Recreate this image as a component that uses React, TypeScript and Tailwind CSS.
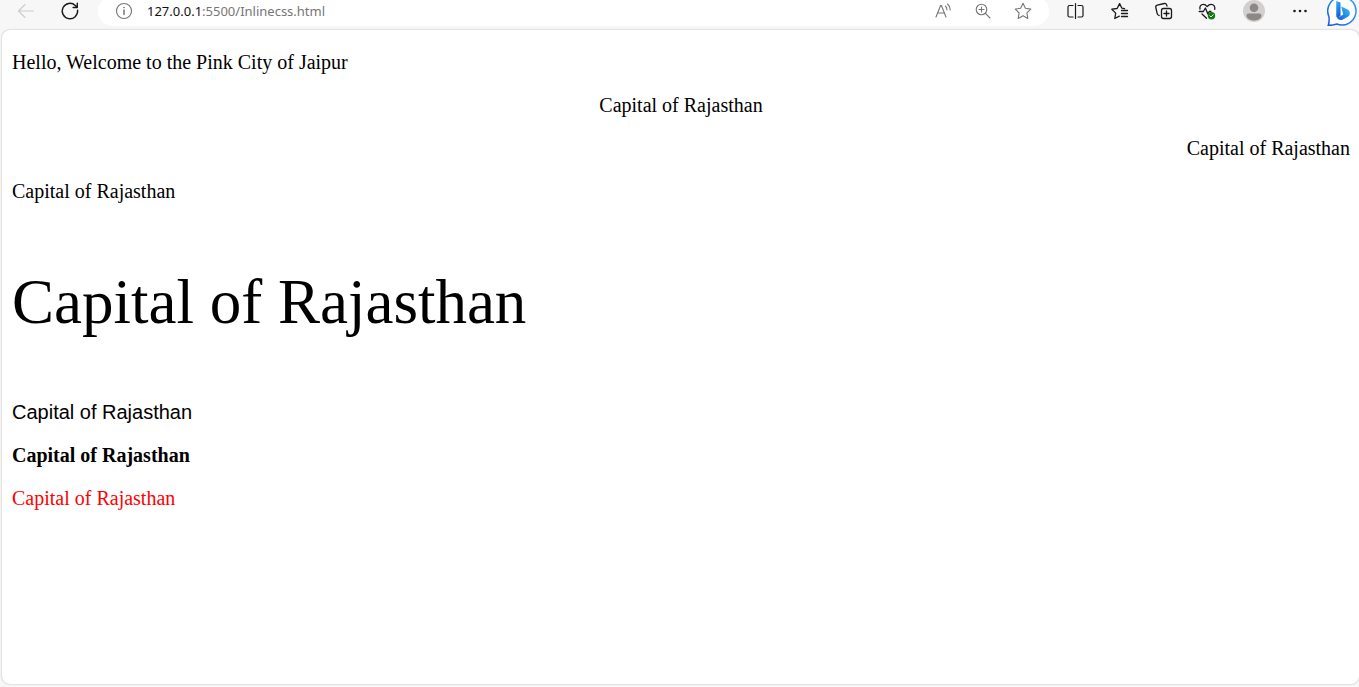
import type { ReactNode } from "react";

type IconButtonProps = {
  label: string;
  size?: string;
  children: ReactNode;
};

function IconButton({ label, size = "w-5", children }: IconButtonProps) {
  return (
    <button
      type="button"
      aria-label={label}
      className={`flex h-[22px] shrink-0 items-center justify-center ${size}`}
    >
      {children}
    </button>
  );
}

function Glyph({ children, width = 1.2 }: { children: ReactNode; width?: number }) {
  return (
    <svg
      viewBox="0 0 20 20"
      className="size-5 shrink-0"
      fill="none"
      stroke="currentColor"
      strokeWidth={width}
      strokeLinecap="round"
      strokeLinejoin="round"
      aria-hidden="true"
    >
      {children}
    </svg>
  );
}

function BingLogo() {
  return (
    <svg viewBox="0 0 30 30" className="size-[30px] shrink-0" aria-hidden="true">
      <defs>
        <linearGradient id="ring" x1="0" y1="1" x2="1" y2="0">
          <stop offset="0" stopColor="#1656d8" />
          <stop offset="0.5" stopColor="#2a80ee" />
          <stop offset="1" stopColor="#3aa5f5" />
        </linearGradient>
        <linearGradient id="stem" x1="0" y1="0" x2="0.4" y2="1">
          <stop offset="0" stopColor="#38b6f5" />
          <stop offset="1" stopColor="#1459dc" />
        </linearGradient>
        <linearGradient id="bowl" x1="0" y1="1" x2="1" y2="0">
          <stop offset="0" stopColor="#1757df" />
          <stop offset="1" stopColor="#39c5f3" />
        </linearGradient>
      </defs>
      <path
        d="M15 1a14 14 0 1 1-5.2 27c-2.6.9-5.5 1.4-8.5 1.3 1-3 1-6 .6-8.8A14 14 0 0 1 15 1z"
        fill="#fff"
        stroke="url(#ring)"
        strokeWidth="1.5"
      />
      <path
        d="M14.2 10.6l6 2.600c2 .9 2.800 2.500 2.600 4.600-.2 1.500-1 2.500-2.200 3.200l-4.600 2.400c-2.200 1.100-4.600.7-5.600-1.400l5.800-3.400z"
        fill="url(#bowl)"
      />
      <path d="M9.200 5l4.300 1.600v13l-2.500 2.700c-1-.5-1.800-1.500-1.800-2.800z" fill="url(#stem)" />
    </svg>
  );
}

function Toolbar() {
  return (
    <header className="flex h-[30px] shrink-0 items-start overflow-hidden bg-[#f7f7f7] pr-0.5 pl-4 text-[#1a1a1a]">
      <nav className="flex gap-6" aria-label="History">
        <IconButton label="Back">
          <span className="text-[#cccccc]">
            <Glyph width={1.1}>
              <path d="M2.500 10H17.500M9 3.500L2.500 10l6.500 6.500" />
            </Glyph>
          </span>
        </IconButton>
        <IconButton label="Refresh">
          <Glyph width={1.4}>
            <path d="M17.600 9.200A7.700 7.700 0 1 1 15.300 4.500L17.300 6.500M17.300 2.300v4.200h-4.200" />
          </Glyph>
        </IconButton>
      </nav>

      <div className="-mt-1 ml-[18px] flex h-[30px] flex-1 items-center rounded-full bg-white pr-4 pl-4 text-[#767676]">
        <IconButton label="View site information">
          <Glyph width={1.1}>
            <circle cx="10" cy="10" r="7.5" />
            <path d="M10 9v4.500" strokeWidth="1.5" />
            <circle cx="10" cy="6.6" r="0.5" fill="currentColor" strokeWidth="0.6" />
          </Glyph>
        </IconButton>
        <div
          role="textbox"
          aria-label="Address"
          contentEditable
          suppressContentEditableWarning
          spellCheck={false}
          className="ml-[13px] min-w-0 flex-1 truncate font-['Noto_Sans',sans-serif] text-[13px] leading-5 outline-none"
        >
          <span className="text-[#111111]">127.0.0.1</span>:5500/Inlinecss.html
        </div>
        <div className="flex gap-5">
          <IconButton label="Read aloud">
            <Glyph width={1.1}>
              <path d="M3 16L7.600 4.500h.8L13 16M4.700 12h6.600M12.500 5.200c1 1 1.400 2.100 1.400 3.500M14.500 3c1.900 1.700 2.800 3.700 2.800 6" />
            </Glyph>
          </IconButton>
          <IconButton label="Zoom">
            <Glyph width={1.1}>
              <circle cx="8.5" cy="8.5" r="5.3" />
              <path d="M12.400 12.400L17 17M6 8.500h5M8.500 6v5" />
            </Glyph>
          </IconButton>
          <IconButton label="Add this page to favorites">
            <Glyph width={1.1}>
              <path d="M10 2.300l2.400 5 5.400.8-3.900 3.800.9 5.500-4.800-2.600-4.800 2.600.9-5.500L2.200 8.100l5.400-.8z" />
            </Glyph>
          </IconButton>
        </div>
      </div>

      <div className="flex gap-6 pl-4">
        <IconButton label="Split screen">
          <Glyph width={1.2}>
            <path d="M10.500 2.500v15M8 4.500H4.500a1.500 1.500 0 0 0-1.500 1.500v8.500a1.500 1.500 0 0 0 1.500 1.500H8M13 4.500h3.500A1.500 1.500 0 0 1 18 6v8.500a1.500 1.500 0 0 1-1.500 1.500H13" />
          </Glyph>
        </IconButton>
        <IconButton label="Favorites">
          <Glyph width={1.3}>
            <path d="M10.300 15.200l-4.500 2.300.9-5.400L2.800 8.200l5.300-.7L10.600 2.600l2.300 4.600 2.600.4M12.500 9.500h6M12.500 12.500h6M12.500 15.500h6" />
          </Glyph>
        </IconButton>
        <IconButton label="Collections">
          <Glyph width={1.3}>
            <rect x="8.5" y="7.5" width="10" height="10" rx="2" />
            <path d="M13.500 10v5M11 12.500h5M6.200 14.500l-1-.5a2 2 0 0 1-1-1.300L2.800 6.500a2 2 0 0 1 1.500-2.300l7-1.700a2 2 0 0 1 2.300 1.300l.4 1.300" />
          </Glyph>
        </IconButton>
        <IconButton label="Browser essentials">
          <Glyph width={1.3}>
            <path d="M3 8C2.300 5.300 4 3.400 6.300 3.400c1.600 0 2.800.8 3.900 2.200 1.100-1.400 2.300-2.200 3.900-2.200 2.700 0 4.300 2.300 3.600 5M2.200 10.500h4.200l2-3.500 2.500 6 1.500-2.700h1.600M5 13l4.500 4.300" />
            <circle cx="14.5" cy="14.8" r="3.7" fill="#107c10" stroke="none" />
            <path d="M12.900 14.900l1.100 1.100 2.200-2.300" stroke="#fff" strokeWidth="1" />
          </Glyph>
        </IconButton>
        <IconButton label="Profile" size="w-[26px]">
          <svg viewBox="0 0 22 22" className="size-[22px] shrink-0" aria-hidden="true">
            <circle cx="11" cy="11" r="11" fill="#d2d0ce" />
            <circle cx="11" cy="7.8" r="4.3" fill="#8b8886" />
            <path d="M3.500 15.500c0-1.200.9-2 2-2h11c1.100 0 2 .8 2 2 0 2.700-3.200 5-7.500 5s-7.500-2.300-7.500-5z" fill="#8b8886" />
          </svg>
        </IconButton>
        <IconButton label="Settings and more">
          <Glyph>
            <g fill="currentColor" stroke="none">
              <circle cx="3.5" cy="10" r="1.3" />
              <circle cx="9" cy="10" r="1.3" />
              <circle cx="14.5" cy="10" r="1.3" />
            </g>
          </Glyph>
        </IconButton>
      </div>
      <div className="ml-4">
        <IconButton label="Bing Chat" size="w-[30px]">
          <BingLogo />
        </IconButton>
      </div>
    </header>
  );
}

export default function App() {
  return (
    <div className="flex min-h-screen flex-col bg-[#f7f7f7]">
      <Toolbar />
      <main className="mb-[3px] ml-0.5 flex-1 rounded-lg bg-white pt-[21px] pr-[9px] pb-5 pl-2.5 font-['Liberation_Serif',serif] text-xl leading-[23px] text-black shadow-[0_0_2px_rgba(0,0,0,0.3)]">
        <p>Hello, Welcome to the Pink City of Jaipur</p>
        <p className="mt-5 text-center">Capital of Rajasthan</p>
        <p className="mt-5 text-right">Capital of Rajasthan</p>
        <p className="mt-5">Capital of Rajasthan</p>
        <p className="my-[63px] text-[63px] leading-[72px]">Capital of Rajasthan</p>
        <p className="font-['Liberation_Sans',sans-serif]">Capital of Rajasthan</p>
        <p className="mt-5 font-bold">Capital of Rajasthan</p>
        <p className="mt-5 text-[#ff0000]">Capital of Rajasthan</p>
      </main>
    </div>
  );
}
